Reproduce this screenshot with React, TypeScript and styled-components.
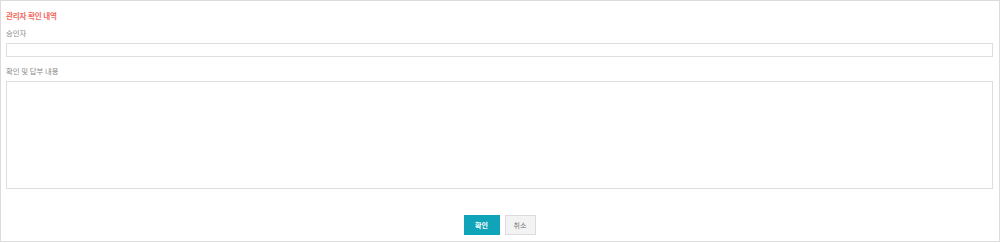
import React from "react";
import styled, { createGlobalStyle } from "styled-components";

const Global = createGlobalStyle`
  html, body { margin: 0; padding: 0; background: #fff; }
  body { font-family: "Noto Sans CJK KR", "Noto Sans", sans-serif; }
  * { box-sizing: border-box; }
`;

const Panel = styled.section`
  width: 1000px;
  height: 242px;
  border: 1px solid #dcdcdc;
  padding: 10px 6px 0 5px;
  display: flex;
  flex-direction: column;
`;

const Title = styled.h3`
  margin: 0;
  font-size: 7.5px;
  line-height: 10px;
  font-weight: 700;
  color: #f26b5f;
  letter-spacing: -0.1px;
`;

const Label = styled.label<{ $top: number }>`
  display: block;
  margin-top: ${(p) => p.$top}px;
  font-size: 7.4px;
  line-height: 10px;
  color: #8a8a8a;
`;

const Input = styled.input`
  display: block;
  width: 100%;
  height: 14px;
  margin-top: 5px;
  border: 1px solid #dedede;
  padding: 0 4px;
  font-size: 8px;
  outline: none;
`;

const TextArea = styled.textarea`
  display: block;
  width: 100%;
  height: 108px;
  margin-top: 5px;
  border: 1px solid #dedede;
  padding: 4px;
  resize: none;
  font-size: 8px;
  outline: none;
`;

const Actions = styled.div`
  display: flex;
  justify-content: center;
  gap: 5px;
  margin-top: 26px;
`;

const Button = styled.button<{ $primary?: boolean }>`
  height: 20px;
  width: ${(p) => (p.$primary ? 36 : 31)}px;
  padding: 0;
  font-family: inherit;
  font-size: 7px;
  font-weight: ${(p) => (p.$primary ? 700 : 400)};
  color: ${(p) => (p.$primary ? "#ffffff" : "#777777")};
  background: ${(p) => (p.$primary ? "#10a4b8" : "#f3f3f3")};
  border: 1px solid ${(p) => (p.$primary ? "#10a4b8" : "#dcdcdc")};
  cursor: pointer;
`;

export default function App() {
  return (
    <>
      <Global />
      <Panel>
        <Title>관리자 확인 내역</Title>
        <Label $top={7}>승인자</Label>
        <Input />
        <Label $top={9}>확인 및 답부 내용</Label>
        <TextArea />
        <Actions>
          <Button $primary>확인</Button>
          <Button>취소</Button>
        </Actions>
      </Panel>
    </>
  );
}
